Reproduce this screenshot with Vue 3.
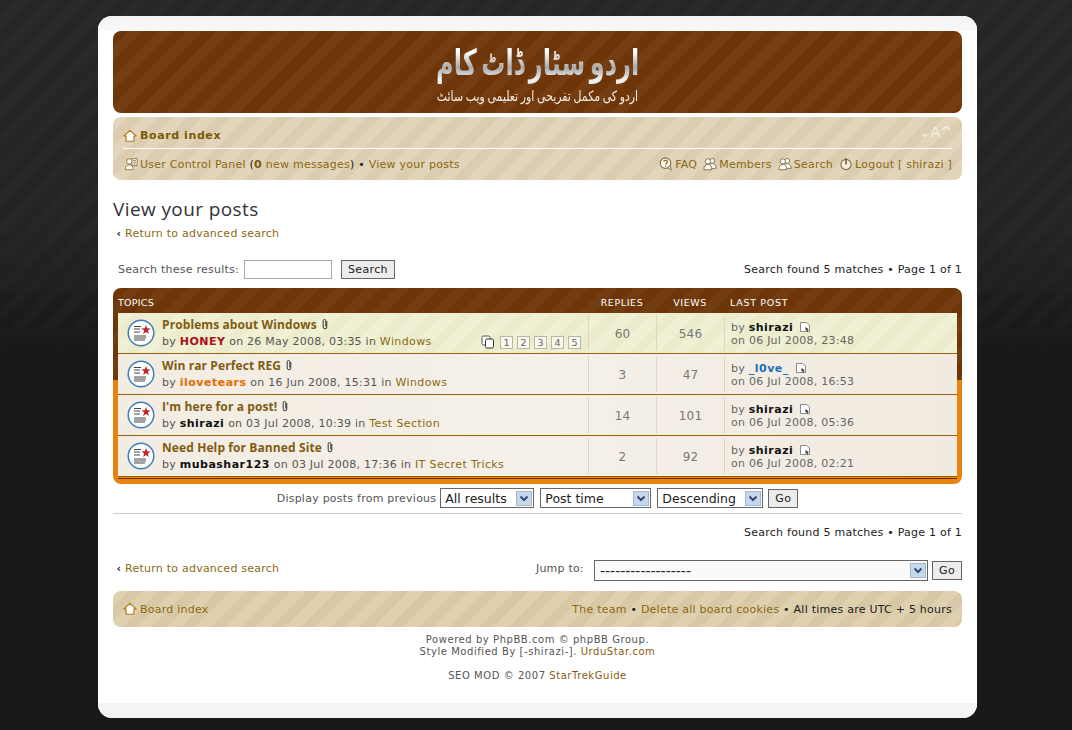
<template>
  <svg class="defs" aria-hidden="true">
    <symbol id="i-home" viewBox="0 0 16 16">
      <path d="M8 1.500 15 8h-2.500v6h-9V8H1z" fill="#fff" stroke="#b5761c" stroke-width="1.300" stroke-linejoin="round" />
    </symbol>
    <symbol id="i-ucp" viewBox="0 0 16 16">
      <rect x="9" y="2" width="6" height="8" fill="#fff" stroke="#8a6a2a" />
      <path d="M10.500 4h3M10.500 6h3M10.500 8h3" stroke="#8a6a2a" />
      <circle cx="6" cy="5" r="3" fill="#fff" stroke="#8a6a2a" />
      <path d="M1.500 14.500c0-4 1.500-5.500 4.500-5.500s4.500 1.500 4.500 5.500z" fill="#fff" stroke="#8a6a2a" />
    </symbol>
    <symbol id="i-faq" viewBox="0 0 16 16">
      <circle cx="7.500" cy="7" r="6" fill="#fff" stroke="#7d6a3c" stroke-width="1.200" />
      <path d="m10 12 4 3-1-5z" fill="#fff" stroke="#7d6a3c" />
      <path d="M5.500 5.500c0-2.600 4.200-2.600 4.200 0 0 1.500-2 1.500-2 3" fill="none" stroke="#a3691b" stroke-width="1.500" />
      <path d="M7.700 9.600v1.500" stroke="#a3691b" stroke-width="1.500" />
    </symbol>
    <symbol id="i-members" viewBox="0 0 16 16">
      <circle cx="10.500" cy="4.500" r="2.800" fill="#fff" stroke="#7d6a3c" />
      <path d="M7 13c0-4 1-5.500 3.500-5.500S15 9 15 13z" fill="#fff" stroke="#7d6a3c" />
      <circle cx="5.500" cy="5" r="3" fill="#fff" stroke="#7d6a3c" />
      <path d="M1 14.500c0-4 1.500-6 4.500-6s4.500 2 4.500 6z" fill="#fff" stroke="#7d6a3c" />
    </symbol>
    <symbol id="i-logout" viewBox="0 0 16 16">
      <circle cx="8" cy="8.500" r="5.800" fill="#f6efe0" stroke="#7d6a3c" stroke-width="1.200" />
      <path d="M8 1.500v7" stroke="#7d6a3c" stroke-width="2" />
    </symbol>
    <symbol id="i-clip" viewBox="0 0 8 12">
      <path d="M5.800 3v6a1.800 1.800 0 0 1-3.600 0V2.800a1.300 1.300 0 0 1 2.600 0V8.500" fill="none" stroke="#333" stroke-width="1" />
    </symbol>
    <symbol id="i-topic" viewBox="0 0 28 28">
      <circle cx="14" cy="14" r="12.800" fill="#fff" stroke="#3f7fb8" stroke-width="1.500" />
      <path d="M7 7.500h7M7 10h6M7 13h6M7 17h12M7 19h12M7 21h11" stroke="#44484c" stroke-width="1" />
      <path d="m19 6 1.200 3.300 3.500.1-2.800 2.100 1 3.400-2.900-2-2.900 2 1-3.400-2.800-2.100 3.500-.1z" fill="#c0272d" />
    </symbol>
    <symbol id="i-last" viewBox="0 0 12 12">
      <path d="M1.500 1.500h6l3 2.500v6.500h-9z" fill="#fff" stroke="#8a8a8a" />
      <path d="m6.500 6 3.500 2.500H8.500l.8 2H8L7.200 8.800 6.500 9.500z" fill="#333" />
    </symbol>
    <symbol id="i-pages" viewBox="0 0 14 14">
      <rect x="1" y="1" width="8" height="9" rx="1.500" fill="#fff" stroke="#555" />
      <rect x="4.500" y="4" width="8" height="9" rx="1.500" fill="#fff" stroke="#333" />
    </symbol>
  </svg>

  <div class="wrap">
    <div class="cap top"></div>
    <div class="inner">
      <header class="logo">
        <div class="logo-main" dir="rtl" lang="ur">اردو سٹار ڈاٹ کام</div>
        <div class="logo-sub" dir="rtl" lang="ur">اردو کی مکمل تفریحی اور تعلیمی ویب سائٹ</div>
      </header>

      <nav class="navbar">
        <div class="nav-row first">
          <a class="crumb"><svg class="ico home"><use href="#i-home" /></svg><b>Board index</b></a>
          <span class="resize">⌄A^</span>
        </div>
        <div class="nav-row second">
          <span class="left">
            <svg class="ico"><use href="#i-ucp" /></svg><a>User Control Panel</a>
            <span class="dark"> (<b class="zero">0</b> <a>new messages</a>) • </span><a>View your posts</a>
          </span>
          <span class="right">
            <a v-for="l in navLinks" :key="l.label" class="nav-link">
              <svg class="ico"><use :href="l.icon" /></svg>{{ l.label }}
            </a>
          </span>
        </div>
      </nav>

      <h2>View your posts</h2>
      <p class="back"><span class="arrow">‹</span><a>Return to advanced search</a></p>

      <div class="search-row">
        <div class="search-form">
          <label>Search these results:</label>
          <input class="field" type="text" />
          <button class="btn search-btn">Search</button>
        </div>
        <div class="matches">Search found 5 matches • Page 1 of 1</div>
      </div>

      <div class="forabg">
        <div class="grid head">
          <div class="c-topic">TOPICS</div>
          <div class="c-num">REPLIES</div>
          <div class="c-num">VIEWS</div>
          <div class="c-last">LAST POST</div>
        </div>
        <div v-for="(t, i) in topics" :key="t.title" class="grid row" :class="{ hot: i === 0 }">
          <div class="c-topic topic-cell">
            <svg class="topic-icon"><use href="#i-topic" /></svg>
            <div class="topic-text">
              <div class="title"><a>{{ t.title }}</a><svg class="clip"><use href="#i-clip" /></svg></div>
              <div class="by">by <b :class="t.cls">{{ t.author }}</b> on {{ t.date }} in <a>{{ t.forum }}</a></div>
            </div>
            <div v-if="t.pages" class="pager">
              <svg class="pages-ico"><use href="#i-pages" /></svg>
              <span v-for="n in t.pages" :key="n" class="pg">{{ n }}</span>
            </div>
          </div>
          <div class="c-num val">{{ t.replies }}</div>
          <div class="c-num val">{{ t.views }}</div>
          <div class="c-last last">
            <div>by <b :class="t.lastCls">{{ t.lastBy }}</b> <svg class="last-ico"><use href="#i-last" /></svg></div>
            <div>on {{ t.lastDate }}</div>
          </div>
        </div>
        <div class="end-line"></div>
      </div>

      <div class="sort-row">
        <label>Display posts from previous</label>
        <select class="sel s1"><option>All results</option></select>
        <select class="sel s2"><option>Post time</option></select>
        <select class="sel s3"><option>Descending</option></select>
        <button class="btn go">Go</button>
      </div>
      <hr />
      <div class="matches lower">Search found 5 matches • Page 1 of 1</div>

      <div class="jump-row">
        <p class="back flat"><span class="arrow">‹</span><a>Return to advanced search</a></p>
        <div class="jump">
          <label>Jump to:</label>
          <select class="sel s4"><option>------------------</option></select>
          <button class="btn go">Go</button>
        </div>
      </div>

      <div class="navbar foot">
        <a class="crumb"><svg class="ico home"><use href="#i-home" /></svg>Board index</a>
        <span><a>The team</a> <i>•</i> <a>Delete all board cookies</a> <i>• All times are UTC + 5 hours</i></span>
      </div>

      <footer class="copy">
        <div>Powered by PhpBB.com © phpBB Group.</div>
        <div>Style Modified By [-shirazi-]. <a>UrduStar.com</a></div>
        <div class="seo">SEO MOD © 2007 <a>StarTrekGuide</a></div>
      </footer>
    </div>
    <div class="cap bottom"></div>
  </div>
</template>

<script setup>
const navLinks = [
  { label: 'FAQ', icon: '#i-faq' },
  { label: 'Members', icon: '#i-members' },
  { label: 'Search', icon: '#i-members' },
  { label: 'Logout [ shirazi ]', icon: '#i-logout' }
]

const topics = [
  { title: 'Problems about Windows', author: 'HONEY', cls: 'red', date: '26 May 2008, 03:35', forum: 'Windows', pages: 5, replies: 60, views: 546, lastBy: 'shirazi', lastDate: '06 Jul 2008, 23:48' },
  { title: 'Win rar Perfect REG', author: 'ilovetears', cls: 'orange', date: '16 Jun 2008, 15:31', forum: 'Windows', replies: 3, views: 47, lastBy: '_l0ve_', lastCls: 'blue', lastDate: '06 Jul 2008, 16:53' },
  { title: "I'm here for a post!", author: 'shirazi', date: '03 Jul 2008, 10:39', forum: 'Test Section', replies: 14, views: 101, lastBy: 'shirazi', lastDate: '06 Jul 2008, 05:36' },
  { title: 'Need Help for Banned Site', author: 'mubashar123', date: '03 Jul 2008, 17:36', forum: 'IT Secret Tricks', replies: 2, views: 92, lastBy: 'shirazi', lastDate: '06 Jul 2008, 02:21' }
]
</script>

<style>
html, body {
  margin: 0;
  background-color: #181818;
}
body {
  min-height: 730px;
  background-image:
    repeating-linear-gradient(135deg, rgba(0, 0, 0, 0.1) 0, rgba(0, 0, 0, 0.1) 11px, rgba(0, 0, 0, 0) 11px, rgba(0, 0, 0, 0) 21px),
    linear-gradient(180deg, rgba(24, 24, 24, 0) 0, rgba(24, 24, 24, 0.2) 230px, rgba(24, 24, 24, 0.5) 295px, rgba(24, 24, 24, 0.7) 330px, #181818 352px),
    repeating-linear-gradient(135deg, #262626 0, #262626 11px, #2a2a2a 11px, #2a2a2a 21px);
  background-size: 100% 36px, 100% 100%, 100% 100%;
  background-position: 0 293px, 0 0, 0 0;
  background-repeat: no-repeat;
}
</style>

<style scoped>
.defs {
  position: absolute;
  width: 0;
  height: 0;
}

.wrap {
  margin: 16px 95px 12px 98px;
  border-radius: 14px;
  background: #fff;
  overflow: hidden;
  font-family: "DejaVu Sans", Verdana, sans-serif;
  font-size: 11px;
  letter-spacing: 0.24px;
  color: #444;
}

.cap {
  height: 15px;
}
.cap.top {
  background: linear-gradient(#f2f2f2, #f9f9f9);
}
.cap.bottom {
  background: #f4f4f4;
}

.inner {
  padding: 0 15px;
  height: 672px;
}

a {
  color: #8a6a10;
}

.logo {
  height: 82px;
  box-sizing: border-box;
  padding-top: 9px;
  border-radius: 8px;
  background: repeating-linear-gradient(135deg, #6d3508 0, #6d3508 11px, #753d12 11px, #753d12 21px);
  text-align: center;
  overflow: hidden;
}
.logo-main {
  font-family: "DejaVu Sans", sans-serif;
  font-size: 36px;
  font-weight: 700;
  line-height: 46px;
  letter-spacing: 0;
  word-spacing: -6px;
  background: linear-gradient(#fff 25%, #a9a9a9 60%, #eee 85%);
  -webkit-background-clip: text;
  background-clip: text;
  color: transparent;
  width: fit-content;
  margin: 0 auto;
  transform: scaleX(0.67);
}
.logo-sub {
  font-family: "DejaVu Sans", sans-serif;
  font-size: 14px;
  line-height: 20px;
  letter-spacing: 0;
  word-spacing: -1px;
  color: #f3eee6;
  transform: scaleX(0.78);
}

.navbar {
  margin-top: 4px;
  height: 63px;
  box-sizing: border-box;
  padding: 0 10px;
  border-radius: 8px;
  background: repeating-linear-gradient(135deg, #e2d5bb 0, #e2d5bb 11px, #dccdb0 11px, #dccdb0 21px);
}

.nav-row {
  display: flex;
  align-items: center;
  justify-content: space-between;
}
.nav-row.first {
  height: 32px;
  box-sizing: border-box;
  padding-top: 6px;
  border-bottom: 1px solid #fff;
}
.nav-row.second {
  height: 30px;
}

.crumb {
  display: flex;
  align-items: center;
  gap: 3px;
}
.crumb b {
  color: #7a5a08;
  letter-spacing: 0.6px;
}
.resize {
  color: #f5f0e5;
  font-size: 14px;
  margin-top: -7px;
  letter-spacing: 0;
}

.ico {
  width: 14px;
  height: 14px;
  vertical-align: -3px;
  flex: none;
}
.home {
  width: 14px;
  height: 14px;
}
.left .ico {
  margin-left: 1px;
  margin-right: 2px;
}
.dark {
  color: #222;
}
.zero {
  color: #7a5a08;
}
.right {
  display: flex;
  gap: 6px;
}
.nav-link .ico {
  margin-right: 2px;
}

h2 {
  margin: 17px 0 0;
  font-family: "Open Sans", "DejaVu Sans", sans-serif;
  font-size: 19px;
  font-weight: 400;
  line-height: 24px;
  letter-spacing: 0.4px;
  color: #333;
}

.back {
  margin: 5px 0 0;
  line-height: 16px;
}
.back.flat {
  margin: 0;
}
.arrow {
  display: inline-block;
  width: 12px;
  text-align: center;
  color: #222;
  font-weight: 700;
}

.search-row {
  display: flex;
  justify-content: space-between;
  align-items: center;
  margin-top: 17px;
  height: 20px;
}
.search-form {
  display: flex;
  align-items: center;
  padding-left: 5px;
}
.search-form label {
  color: #555;
}
.field {
  box-sizing: border-box;
  width: 88px;
  height: 19px;
  margin-left: 5px;
  border: 1px solid #aaa;
  background: #fff;
}
.btn {
  box-sizing: border-box;
  border: 1px solid #666;
  background: #ececec;
  font: 11px "DejaVu Sans", sans-serif;
  letter-spacing: 0.35px;
  color: #222;
  padding: 0;
  height: 19px;
}
.search-btn {
  width: 54px;
  margin-left: 9px;
}
.matches {
  color: #222;
  text-align: right;
}

.forabg {
  margin-top: 9px;
  padding: 0 5px 5px;
  border-radius: 8px;
  background:
    repeating-linear-gradient(135deg, rgba(255, 255, 255, 0) 0, rgba(255, 255, 255, 0) 11px, rgba(255, 255, 255, 0.04) 11px, rgba(255, 255, 255, 0.04) 21px) 0 0 / 100% 92px no-repeat,
    linear-gradient(#6d3508 92px, #e8830f 92px);
}

.grid {
  display: grid;
  grid-template-columns: 470px 68px 68px 1fr;
}
.head {
  height: 25px;
  align-items: center;
  color: #fff;
  font-size: 9.5px;
  padding-top: 3px;
  box-sizing: border-box;
}
.head .c-num {
  text-align: center;
  letter-spacing: 0.6px;
}
.head .c-last {
  padding-left: 6px;
  letter-spacing: 0.7px;
}

.row {
  height: 41px;
  box-sizing: border-box;
  border-bottom: 1px solid #96600f;
  background: linear-gradient(90deg, #f2ece2, #f5f0e8 50%, #f0eae0);
}
.row.hot {
  background: repeating-linear-gradient(135deg, #f0f0d4 0, #f0f0d4 11px, #ecebcc 11px, #ecebcc 21px);
}
.end-line {
  height: 1px;
  margin-top: 1px;
  background: #6d3508;
}

.topic-cell {
  position: relative;
  display: flex;
  align-items: center;
  padding-left: 9px;
}
.topic-icon {
  width: 28px;
  height: 28px;
  flex: none;
}
.topic-text {
  margin-left: 7px;
  padding-top: 1px;
}
.title {
  font-size: 12px;
  font-weight: 700;
  line-height: 16px;
  font-family: "Open Sans", "DejaVu Sans", sans-serif;
  letter-spacing: 0.1px;
}
.title a {
  color: #7f5c12;
}
.clip {
  width: 8px;
  height: 12px;
  margin-left: 4px;
  vertical-align: -1px;
}
.by {
  line-height: 16px;
  color: #555;
  margin-top: 1px;
}
.by a {
  letter-spacing: 0.4px;
}
.by b, .last b {
  color: #111;
  letter-spacing: 0.5px;
}
.by b.red {
  color: #a8101a;
}
.by b.orange {
  color: #e76a00;
}
.last b.blue {
  color: #1c70b8;
}

.pager {
  position: absolute;
  right: 7px;
  bottom: 4px;
  display: flex;
  align-items: center;
  gap: 4px;
}
.pages-ico {
  width: 14px;
  height: 14px;
  margin-right: 1px;
}
.pg {
  box-sizing: border-box;
  width: 13px;
  height: 13px;
  border: 1px solid #b8b8a0;
  background: #f8f8ee;
  color: #666;
  font-size: 9.5px;
  line-height: 11px;
  letter-spacing: 0;
  text-align: center;
}

.c-num.val {
  display: flex;
  align-items: center;
  justify-content: center;
  font-size: 12px;
  color: #777;
  margin: 2px 0;
  padding-top: 2px;
  border-left: 1px solid #ddd6c2;
}
.c-last.last {
  border-left: 1px solid #ddd6c2;
  margin: 2px 0;
  padding: 6px 0 0 6px;
  line-height: 13px;
  color: #666;
}
.last-ico {
  width: 12px;
  height: 12px;
  margin-left: 2px;
  vertical-align: -2px;
}

.sort-row {
  display: flex;
  align-items: center;
  justify-content: center;
  gap: 4px;
  height: 22px;
  margin-top: 3px;
  color: #555;
}
.sel {
  box-sizing: border-box;
  height: 20px;
  appearance: none;
  border: 1px solid #666;
  border-radius: 0;
  padding: 0 0 0 4px;
  font: 12.5px "DejaVu Sans", sans-serif;
  color: #222;
  background: #fff url("data:image/svg+xml,%3Csvg xmlns='http://www.w3.org/2000/svg' width='16' height='15'%3E%3Crect x='.5' y='.5' width='15' height='14' fill='%23c6d8ec' stroke='%23a4b8cc'/%3E%3Cpath d='M4.500 5.500 8 9l3.500-3.500' fill='none' stroke='%23334a7a' stroke-width='2'/%3E%3C/svg%3E") no-repeat right 1px center;
}
.s1 { width: 94px; margin-right: 2px; }
.s2 { width: 111px; margin-right: 2px; }
.s3 { width: 106px; margin-right: 1px; }
.s4 {
  width: 334px;
  height: 21px;
  font-size: 14px;
  padding-left: 5px;
  background-color: #fafafa;
}
.go {
  width: 30px;
  background: #ececec;
}

hr {
  margin: 4px 0 0;
  border: 0;
  border-top: 1px solid #ccc;
}
.lower {
  margin-top: 12px;
  line-height: 14px;
}

.jump-row {
  display: flex;
  justify-content: space-between;
  align-items: center;
  margin-top: 18px;
  height: 21px;
}
.jump {
  display: flex;
  align-items: center;
  gap: 4px;
  padding-top: 4px;
}
.jump label {
  margin-top: -4px;
  margin-right: 6px;
  color: #555;
}

.navbar.foot {
  display: flex;
  align-items: center;
  justify-content: space-between;
  height: 36px;
  margin-top: 12px;
  background: repeating-linear-gradient(135deg, #dfd0b0 0, #dfd0b0 11px, #d8c8a6 11px, #d8c8a6 21px);
}
.foot i {
  font-style: normal;
  color: #222;
}

.copy {
  margin-top: 7px;
  text-align: center;
  font-size: 10px;
  line-height: 12px;
  letter-spacing: 0.55px;
  color: #555;
}
.copy a {
  color: #8a5a10;
}
.seo {
  margin-top: 12px;
}
</style>
